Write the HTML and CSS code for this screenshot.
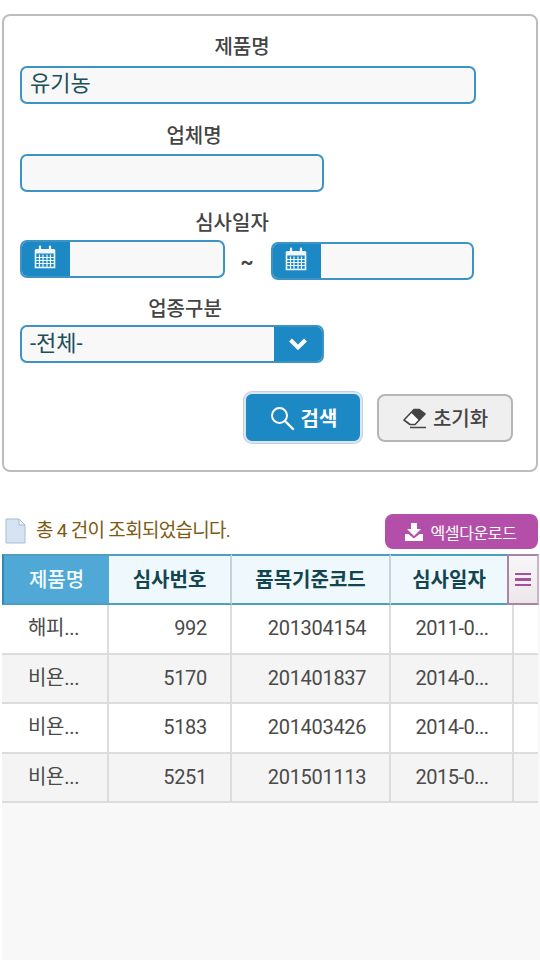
FILE: index.html
```html
<!DOCTYPE html>
<html lang="ko">
<head>
<meta charset="utf-8">
<title>심사 조회</title>
<link rel="stylesheet" href="styles.css">
</head>
<body>
<form class="panel">
  <div class="group g1">
    <div class="label l1">제품명</div>
    <div class="input w-long">유기농</div>
  </div>
  <div class="group g2">
    <div class="label l2">업체명</div>
    <div class="input w-mid"></div>
  </div>
  <div class="group g3">
    <div class="label l3">심사일자</div>
    <div class="dates">
      <div class="date">
        <span class="cal"><svg width="22" height="24" viewBox="0 0 22 24"><path d="M1.500 5.500h19v17h-19z" fill="none" stroke="#eef8fd" stroke-width="1.600"/><path d="M1.500 4h19v4.500h-19z" fill="#eef8fd"/><path d="M5.500 9.500v12.500M9 9.500v12.500M13 9.500v12.500M16.500 9.500v12.500M2 12.500h18M2 15.500h18M2 18.500h18" stroke="#eef8fd" stroke-width="1.200"/><path d="M6 1.500v4M16 1.500v4" stroke="#eef8fd" stroke-width="2.200" stroke-linecap="round"/></svg></span>
      </div>
      <span class="tilde">~</span>
      <div class="date date-b">
        <span class="cal"><svg width="22" height="24" viewBox="0 0 22 24"><path d="M1.500 5.500h19v17h-19z" fill="none" stroke="#eef8fd" stroke-width="1.600"/><path d="M1.500 4h19v4.500h-19z" fill="#eef8fd"/><path d="M5.500 9.500v12.500M9 9.500v12.500M13 9.500v12.500M16.500 9.500v12.500M2 12.500h18M2 15.500h18M2 18.500h18" stroke="#eef8fd" stroke-width="1.200"/><path d="M6 1.500v4M16 1.500v4" stroke="#eef8fd" stroke-width="2.200" stroke-linecap="round"/></svg></span>
      </div>
    </div>
  </div>
  <div class="group g4">
    <div class="label l4">업종구분</div>
    <div class="select w-mid">
      <span class="select-text">-전체-</span>
      <span class="arrow"><svg width="20" height="14" viewBox="0 0 20 14"><path d="M2.500 3l7.500 7.500 7.500-7.500" fill="none" stroke="#fff" stroke-width="4"/></svg></span>
    </div>
  </div>
  <div class="actions">
    <div class="btn btn-search">
      <svg width="26" height="26" viewBox="0 0 26 26"><circle cx="10.500" cy="10.500" r="7.500" fill="none" stroke="#fff" stroke-width="2"/><path d="M16 16l8 8" stroke="#fff" stroke-width="2.400" stroke-linecap="round"/></svg>
      <span>검색</span>
    </div>
    <div class="btn btn-reset">
      <svg width="25" height="22" viewBox="0 0 25 22"><path d="M2 13L12 2.500l5 0L23 7 13 17.500H8z" fill="#fff" stroke="#444" stroke-width="1.600" stroke-linejoin="round"/><path d="M9.500 6L12 2.500h5L23 7l-6 6.500z" fill="#444"/><path d="M8 20.500h16" stroke="#444" stroke-width="1.500"/></svg>
      <span>초기화</span>
    </div>
  </div>
</form>

<div class="summary">
  <div class="count">
    <svg width="21" height="26" viewBox="0 0 21 26"><path d="M1 1h13l6 6v18H1z" fill="#d5e3f3" stroke="#a9bdd0"/><path d="M14 1v6h6z" fill="#f4f8fc" stroke="#a9bdd0"/></svg>
    <span>총 4 건이 조회되었습니다.</span>
  </div>
  <div class="excel">
    <svg width="20" height="20" viewBox="0 0 20 20"><path d="M7 1h6v6h4l-7 7-7-7h4z" fill="#fff"/><path d="M1 12h3.500l5.500 4.500 5.500-4.500H19v7H1z" fill="#fff"/></svg>
    <span>엑셀다운로드</span>
  </div>
</div>

<section class="grid">
  <div class="head">
    <div class="th c1 first">제품명</div>
    <div class="th c2">심사번호</div>
    <div class="th c3">품목기준코드</div>
    <div class="th c4h">심사일자</div>
    <div class="menu"><span></span><span></span><span></span></div>
  </div>
  <div class="row">
    <div class="td c1">해피...</div><div class="td c2 num">992</div><div class="td c3 code">201304154</div><div class="td c4 date-cell">2011-0...</div><div class="td c5"></div>
  </div>
  <div class="row alt">
    <div class="td c1">비욘...</div><div class="td c2 num">5170</div><div class="td c3 code">201401837</div><div class="td c4 date-cell">2014-0...</div><div class="td c5"></div>
  </div>
  <div class="row">
    <div class="td c1">비욘...</div><div class="td c2 num">5183</div><div class="td c3 code">201403426</div><div class="td c4 date-cell">2014-0...</div><div class="td c5"></div>
  </div>
  <div class="row alt">
    <div class="td c1">비욘...</div><div class="td c2 num">5251</div><div class="td c3 code">201501113</div><div class="td c4 date-cell">2015-0...</div><div class="td c5"></div>
  </div>
</section>
</body>
</html>
```
FILE: styles.css
```css
* { box-sizing: border-box; }
html, body { margin: 0; height: 960px; overflow: hidden; }
body {
  width: 540px;
  background: #fff;
  padding-top: 14px;
  display: flex;
  flex-direction: column;
  font-family: Roboto, "Noto Sans CJK KR", sans-serif;
  color: #444;
}
.panel {
  margin: 0 2px 0 2px;
  height: 458px;
  border: 2px solid #bdbdbd;
  border-radius: 8px;
  padding: 17px 0 0 16px;
}
.label {
  height: 28px;
  line-height: 28px;
  font-size: 20px;
  font-weight: 500;
  color: #444;
  text-align: center;
}
.l1 { width: 444px; margin-bottom: 5px; }
.l2 { width: 348px; margin-bottom: 4px; }
.l3 { width: 424px; margin-bottom: 3px; }
.l4 { width: 330px; margin-bottom: 2px; }
.g2 { margin-top: 18px; }
.g3 { margin-top: 17px; }
.g4 { margin-top: 17px; }
.input, .select, .date {
  height: 38px;
  border: 2px solid #3d94c4;
  border-radius: 7px;
  background: #f8f8f8;
}
.input {
  font-size: 22px;
  line-height: 32px;
  color: #1a4f5c;
  padding-left: 8px;
}
.w-long { width: 456px; }
.w-mid { width: 304px; }
.dates { display: flex; align-items: flex-start; height: 38px; }
.date { width: 205px; overflow: hidden; }
.date-b { width: 203px; margin-top: 2px; }
.cal {
  display: flex;
  align-items: center;
  justify-content: flex-start;
  width: 48px;
  height: 100%;
  background: #1c88c4;
  padding: 0 0 4px 12px;
}
.tilde {
  width: 46px;
  height: 38px;
  padding-right: 2px;
  text-align: center;
  font-size: 20px;
  font-weight: 700;
  line-height: 44px;
  color: #444;
}
.select {
  display: flex;
  justify-content: space-between;
  overflow: hidden;
}
.select-text {
  font-size: 22px;
  line-height: 33px;
  color: #1a4f5c;
  padding-left: 8px;
}
.arrow {
  width: 48px;
  background: #1c88c4;
  display: flex;
  align-items: center;
  justify-content: center;
}
.actions {
  display: flex;
  align-items: center;
  margin-top: 29px;
  margin-left: 224px;
  gap: 15px;
}
.btn {
  display: flex;
  align-items: center;
  justify-content: center;
  font-size: 20px;
  font-weight: 500;
  border-radius: 8px;
}
.btn-search {
  width: 118px;
  height: 51px;
  gap: 6px;
  background: #1c88c4;
  color: #fff;
  border: 2px solid #dbe6f2;
  box-shadow: 0 0 0 1px #c3cfe2;
  font-weight: 700;
}
.btn-reset {
  width: 136px;
  height: 48px;
  gap: 6px;
  background: #efefef;
  border: 2px solid #b5b5b5;
  color: #444;
}
.summary {
  margin-top: 42px;
  height: 35px;
  display: flex;
  justify-content: space-between;
  padding-left: 5px;
  padding-right: 2px;
}
.count {
  display: flex;
  align-items: center;
  gap: 10px;
  font-size: 19px;
  letter-spacing: -0.7px;
  color: #7d5a12;
  padding-bottom: 2px;
}
.count span { padding-bottom: 4px; }
.excel {
  width: 153px;
  height: 35px;
  border-radius: 8px;
  background: #b44fa9;
  color: #fff;
  font-size: 16px;
  letter-spacing: -0.4px;
  display: flex;
  align-items: center;
  justify-content: center;
  gap: 7px;
  padding-right: 3px;
}
.grid {
  flex: 1;
  margin: 5px 0 0 2px;
  background: #f8f8f8;
}
.head {
  display: flex;
  height: 51px;
}
.th {
  display: flex;
  align-items: center;
  justify-content: center;
  height: 51px;
  padding-bottom: 2px;
  background: #eff8fc;
  border-top: 2px solid #4d9fbd;
  border-bottom: 2px solid #4d9fbd;
  border-right: 2px solid #c5d3da;
  font-size: 20px;
  font-weight: 700;
  color: #12454f;
}
.first {
  background: #4fa8d5;
  color: #f2fafd;
  border-left: 2px solid #2e8ab5;
  border-right: 0;
  font-weight: 500;
}
.c1 { width: 107px; }
.c2 { width: 123px; }
.c3 { width: 159px; }
.c4 { width: 123px; }
.c4h { width: 116px; border-right: 0; }
.c5 { flex: 1; }
.menu {
  width: 32px;
  height: 51px;
  background: linear-gradient(#f8f6f8, #ebe6ea);
  border: 2px solid #a985a3;
  border-right-color: #c9b5c6;
  display: flex;
  flex-direction: column;
  align-items: center;
  justify-content: center;
  gap: 3px;
}
.menu span {
  display: block;
  width: 16px;
  height: 2.500px;
  background: #a2519a;
}
.row {
  display: flex;
  height: 49.500px;
  width: 536px;
  background: #fff;
  border-bottom: 2px solid #dcdcdc;
}
.alt { background: #f4f4f4; }
.td {
  border-right: 2px solid #dcdcdc;
  font-size: 20px;
  line-height: 46px;
  color: #4a4a4a;
  letter-spacing: -0.3px;
  white-space: nowrap;
}
.td.c5 { border-right: 0; }
.row > .c1 { padding-left: 26px; }
.num { text-align: right; padding-right: 23px; }
.code { text-align: center; padding-left: 13px; }
.date-cell { text-align: center; padding-left: 1px; letter-spacing: -0.5px; }
```
